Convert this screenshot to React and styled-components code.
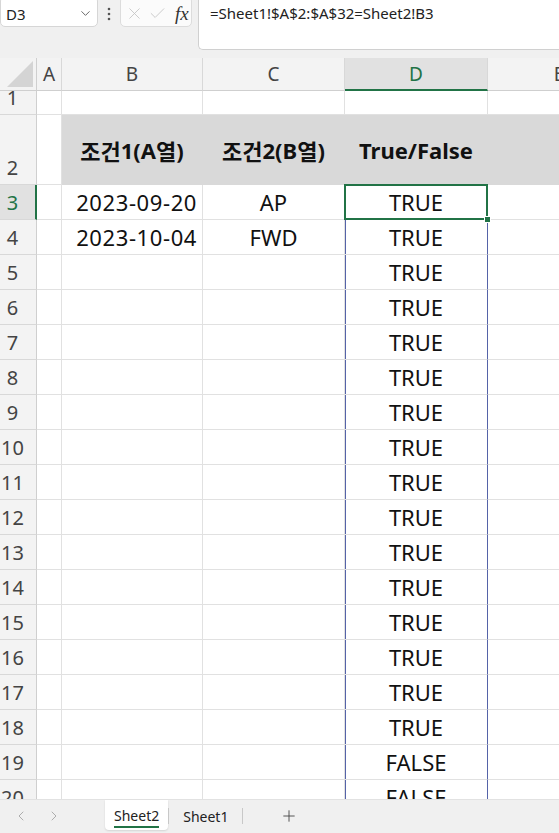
import React from "react";
import styled, { createGlobalStyle, css } from "styled-components";
import { ChevronLeft, ChevronRight, Plus, X, Check, ChevronDown } from "lucide-react";

const GREEN = "#217346";
const GRID = "#e1e1e1";
const TRACE = "#5563a8";
const FILL = "#d9d9d9";

const GlobalStyle = createGlobalStyle`
  * { box-sizing: border-box; }
  body {
    margin: 0;
    background: #f0f0f0;
    font-family: "Noto Sans", "Noto Sans CJK KR", sans-serif;
  }
`;

const Page = styled.div`
  width: 559px;
  height: 833px;
  overflow: hidden;
  display: flex;
  flex-direction: column;
  background: #f0f0f0;
`;

const FormulaBar = styled.div`
  display: flex;
  align-items: flex-start;
  height: 58px;
  flex-shrink: 0;
`;

const NameBox = styled.div`
  width: 98px;
  height: 31px;
  margin-top: -4px;
  background: #fff;
  border: 1px solid #d6d6d6;
  border-radius: 5px;
  display: flex;
  align-items: center;
  justify-content: space-between;
  padding: 4px 4px 0 5px;
  font-size: 15px;
  color: #222;
`;

const MoreDots = styled.div`
  width: 22px;
  height: 27px;
  display: flex;
  align-items: center;
  justify-content: center;
  color: #555;
`;

const FnBox = styled.div`
  width: 72px;
  height: 31px;
  margin-top: -4px;
  background: #fbfbfb;
  border: 1px solid #dcdcdc;
  border-radius: 5px;
  display: flex;
  align-items: center;
  gap: 4px;
  padding: 4px 0 0 4px;
  color: #c4c4c4;
`;

const Fx = styled.span`
  font-family: "Liberation Serif", serif;
  font-style: italic;
  font-size: 19px;
  color: #333;
  margin-left: 4px;
`;

const FormulaInput = styled.div`
  flex: 1;
  height: 54px;
  margin-top: -4px;
  margin-left: 6px;
  background: #fff;
  border: 1px solid #d0d0d0;
  border-right: none;
  border-radius: 0 0 0 5px;
  padding: 6px 11px;
  font-size: 15px;
  line-height: 20px;
  color: #222;
`;

const Sheet = styled.div`
  flex: 1;
  overflow: hidden;
  background: #fff;
`;

const Grid = styled.div`
  display: grid;
  grid-template-columns: 37px 25px 141px 142px 143px 143px;
  grid-template-rows: 33px 24px 70px repeat(18, 35px);
  width: 631px;
`;

const Corner = styled.div`
  background: #f3f3f3;
  border-right: 1px solid #cfcfcf;
  border-bottom: 1px solid #cfcfcf;
  display: flex;
  align-items: flex-end;
  justify-content: flex-end;
  padding: 0 3px 3px 0;
`;

const ColHeader = styled.div`
  background: ${(p) => (p.$active ? "#e1e1e1" : "#f3f3f3")};
  border-right: 1px solid #d8d8d8;
  border-bottom: ${(p) => (p.$active ? `2px solid ${GREEN}` : "1px solid #cfcfcf")};
  color: ${(p) => (p.$active ? GREEN : "#444")};
  font-size: 19px;
  display: flex;
  align-items: center;
  justify-content: center;
  padding-top: ${(p) => (p.$active ? "1px" : "0")};
`;

const RowHeader = styled.div`
  background: ${(p) => (p.$active ? "#e1e1e1" : "#f3f3f3")};
  border-right: ${(p) => (p.$active ? `2px solid ${GREEN}` : "1px solid #cfcfcf")};
  border-bottom: 1px solid #d8d8d8;
  color: ${(p) => (p.$active ? GREEN : "#444")};
  font-size: 20px;
  line-height: 20px;
  display: flex;
  align-items: flex-end;
  justify-content: center;
  padding: 0 ${(p) => (p.$active ? "10px" : "11px")} 6px 0;
`;

const Cell = styled.div`
  position: relative;
  background: ${(p) => (p.$fill ? FILL : "#fff")};
  border-right: 1px solid ${(p) => (p.$fill ? FILL : GRID)};
  border-bottom: 1px solid ${(p) => (p.$fill ? FILL : GRID)};
  font-size: 22px;
  line-height: 22px;
  color: #111;
  display: flex;
  align-items: ${(p) => (p.$header ? "center" : "flex-end")};
  justify-content: ${(p) =>
    p.$align === "right" ? "flex-end" : p.$align === "center" ? "center" : "flex-start"};
  padding: 0 5px ${(p) => (p.$header ? "0" : "6px")};
  white-space: nowrap;
  font-weight: ${(p) => (p.$header ? 700 : 400)};
  letter-spacing: ${(p) => (p.$wide ? "0.6px" : "0")};
  ${(p) =>
    p.$trace &&
    css`
      border-right-color: ${TRACE};
      box-shadow: inset 1px 0 0 ${TRACE};
    `}
  ${(p) =>
    p.$selected &&
    css`
      &::after {
        content: "";
        position: absolute;
        left: -1px;
        top: -1px;
        right: -1px;
        bottom: -1px;
        border: 2px solid ${GREEN};
        pointer-events: none;
      }
    `}
`;

const Handle = styled.span`
  position: absolute;
  right: -4px;
  bottom: -4px;
  width: 7px;
  height: 7px;
  background: ${GREEN};
  border: 1px solid #fff;
  z-index: 2;
`;

const TabBar = styled.div`
  height: 34px;
  flex-shrink: 0;
  background: #f0f0f0;
  border-top: 1px solid #e2e2e2;
  display: flex;
  align-items: flex-start;
  padding-left: 4px;
  color: #333;
`;

const NavButton = styled.div`
  width: 33px;
  height: 32px;
  display: flex;
  align-items: center;
  justify-content: center;
  color: #a8a8a8;
`;

const SheetTab = styled.div`
  height: ${(p) => (p.$active ? "30px" : "32px")};
  padding: 0 ${(p) => (p.$active ? "9px" : "14px")};
  margin-left: ${(p) => p.$offset || 0}px;
  background: ${(p) => (p.$active ? "#fff" : "transparent")};
  border-radius: 0 0 4px 4px;
  box-shadow: ${(p) => (p.$active ? "0 1px 2px rgba(0,0,0,0.12)" : "none")};
  display: flex;
  align-items: center;
  font-size: 14px;
  color: #222;
`;

const TabLabel = styled.span`
  padding-top: 4px;
  border-bottom: 2px solid ${(p) => (p.$active ? GREEN : "transparent")};
  line-height: 20px;
`;

const Divider = styled.div`
  width: 1px;
  height: 16px;
  margin-top: 8px;
  background: #c8c8c8;
`;

const AddSheet = styled.div`
  width: 40px;
  height: 32px;
  margin-left: 26px;
  display: flex;
  align-items: center;
  justify-content: center;
  color: #444;
`;

const Hangul = styled.span`
  font-family: "Noto Sans CJK KR", sans-serif;
`;

const COLS = ["A", "B", "C", "D", "E"];

const data = [
  ["2023-09-20", "AP"],
  ["2023-10-04", "FWD"],
];

const bools = [...Array(16).fill("TRUE"), "FALSE", "FALSE"];

export default function App() {
  return (
    <Page>
      <GlobalStyle />
      <FormulaBar>
        <NameBox>
          <span>D3</span>
          <ChevronDown size={15} strokeWidth={1.4} color="#555" />
        </NameBox>
        <MoreDots>
          <svg width="4" height="14" viewBox="0 0 4 14">
            <circle cx="2" cy="2" r="1.3" fill="#555" />
            <circle cx="2" cy="7" r="1.3" fill="#555" />
            <circle cx="2" cy="12" r="1.3" fill="#555" />
          </svg>
        </MoreDots>
        <FnBox>
          <X size={19} strokeWidth={1.1} />
          <Check size={19} strokeWidth={1.1} />
          <Fx>fx</Fx>
        </FnBox>
        <FormulaInput>=Sheet1!$A$2:$A$32=Sheet2!B3</FormulaInput>
      </FormulaBar>

      <Sheet>
        <Grid>
          <Corner>
            <svg width="26" height="26" viewBox="0 0 26 26">
              <polygon points="26,0 26,26 0,26" fill="#d4d4d4" />
            </svg>
          </Corner>
          {COLS.map((c) => (
            <ColHeader key={c} $active={c === "D"}>
              {c}
            </ColHeader>
          ))}

          <RowHeader>1</RowHeader>
          {COLS.map((c) => (
            <Cell key={c} />
          ))}

          <RowHeader>2</RowHeader>
          <Cell />
          <Cell $fill $header $align="center">
            <Hangul>조건</Hangul>1(A<Hangul>열</Hangul>)
          </Cell>
          <Cell $fill $header $align="center">
            <Hangul>조건</Hangul>2(B<Hangul>열</Hangul>)
          </Cell>
          <Cell $fill $header $align="center">
            True/False
          </Cell>
          <Cell $fill />

          {bools.map((v, i) => {
            const row = i + 3;
            const d = data[i] || ["", ""];
            return (
              <React.Fragment key={row}>
                <RowHeader $active={row === 3}>{row}</RowHeader>
                <Cell />
                <Cell $align="right" $wide>
                  {d[0]}
                </Cell>
                <Cell $align="center">{d[1]}</Cell>
                <Cell $align="center" $selected={row === 3} $trace={row > 3}>
                  {v}
                  {row === 3 && <Handle />}
                </Cell>
                <Cell />
              </React.Fragment>
            );
          })}
        </Grid>
      </Sheet>

      <TabBar>
        <NavButton>
          <ChevronLeft size={16} strokeWidth={1.4} />
        </NavButton>
        <NavButton>
          <ChevronRight size={16} strokeWidth={1.4} />
        </NavButton>
        <SheetTab $active $offset={35}>
          <TabLabel $active>Sheet2</TabLabel>
        </SheetTab>
        <Divider />
        <SheetTab>
          <TabLabel>Sheet1</TabLabel>
        </SheetTab>
        <Divider />
        <AddSheet>
          <Plus size={18} strokeWidth={1.2} />
        </AddSheet>
      </TabBar>
    </Page>
  );
}
